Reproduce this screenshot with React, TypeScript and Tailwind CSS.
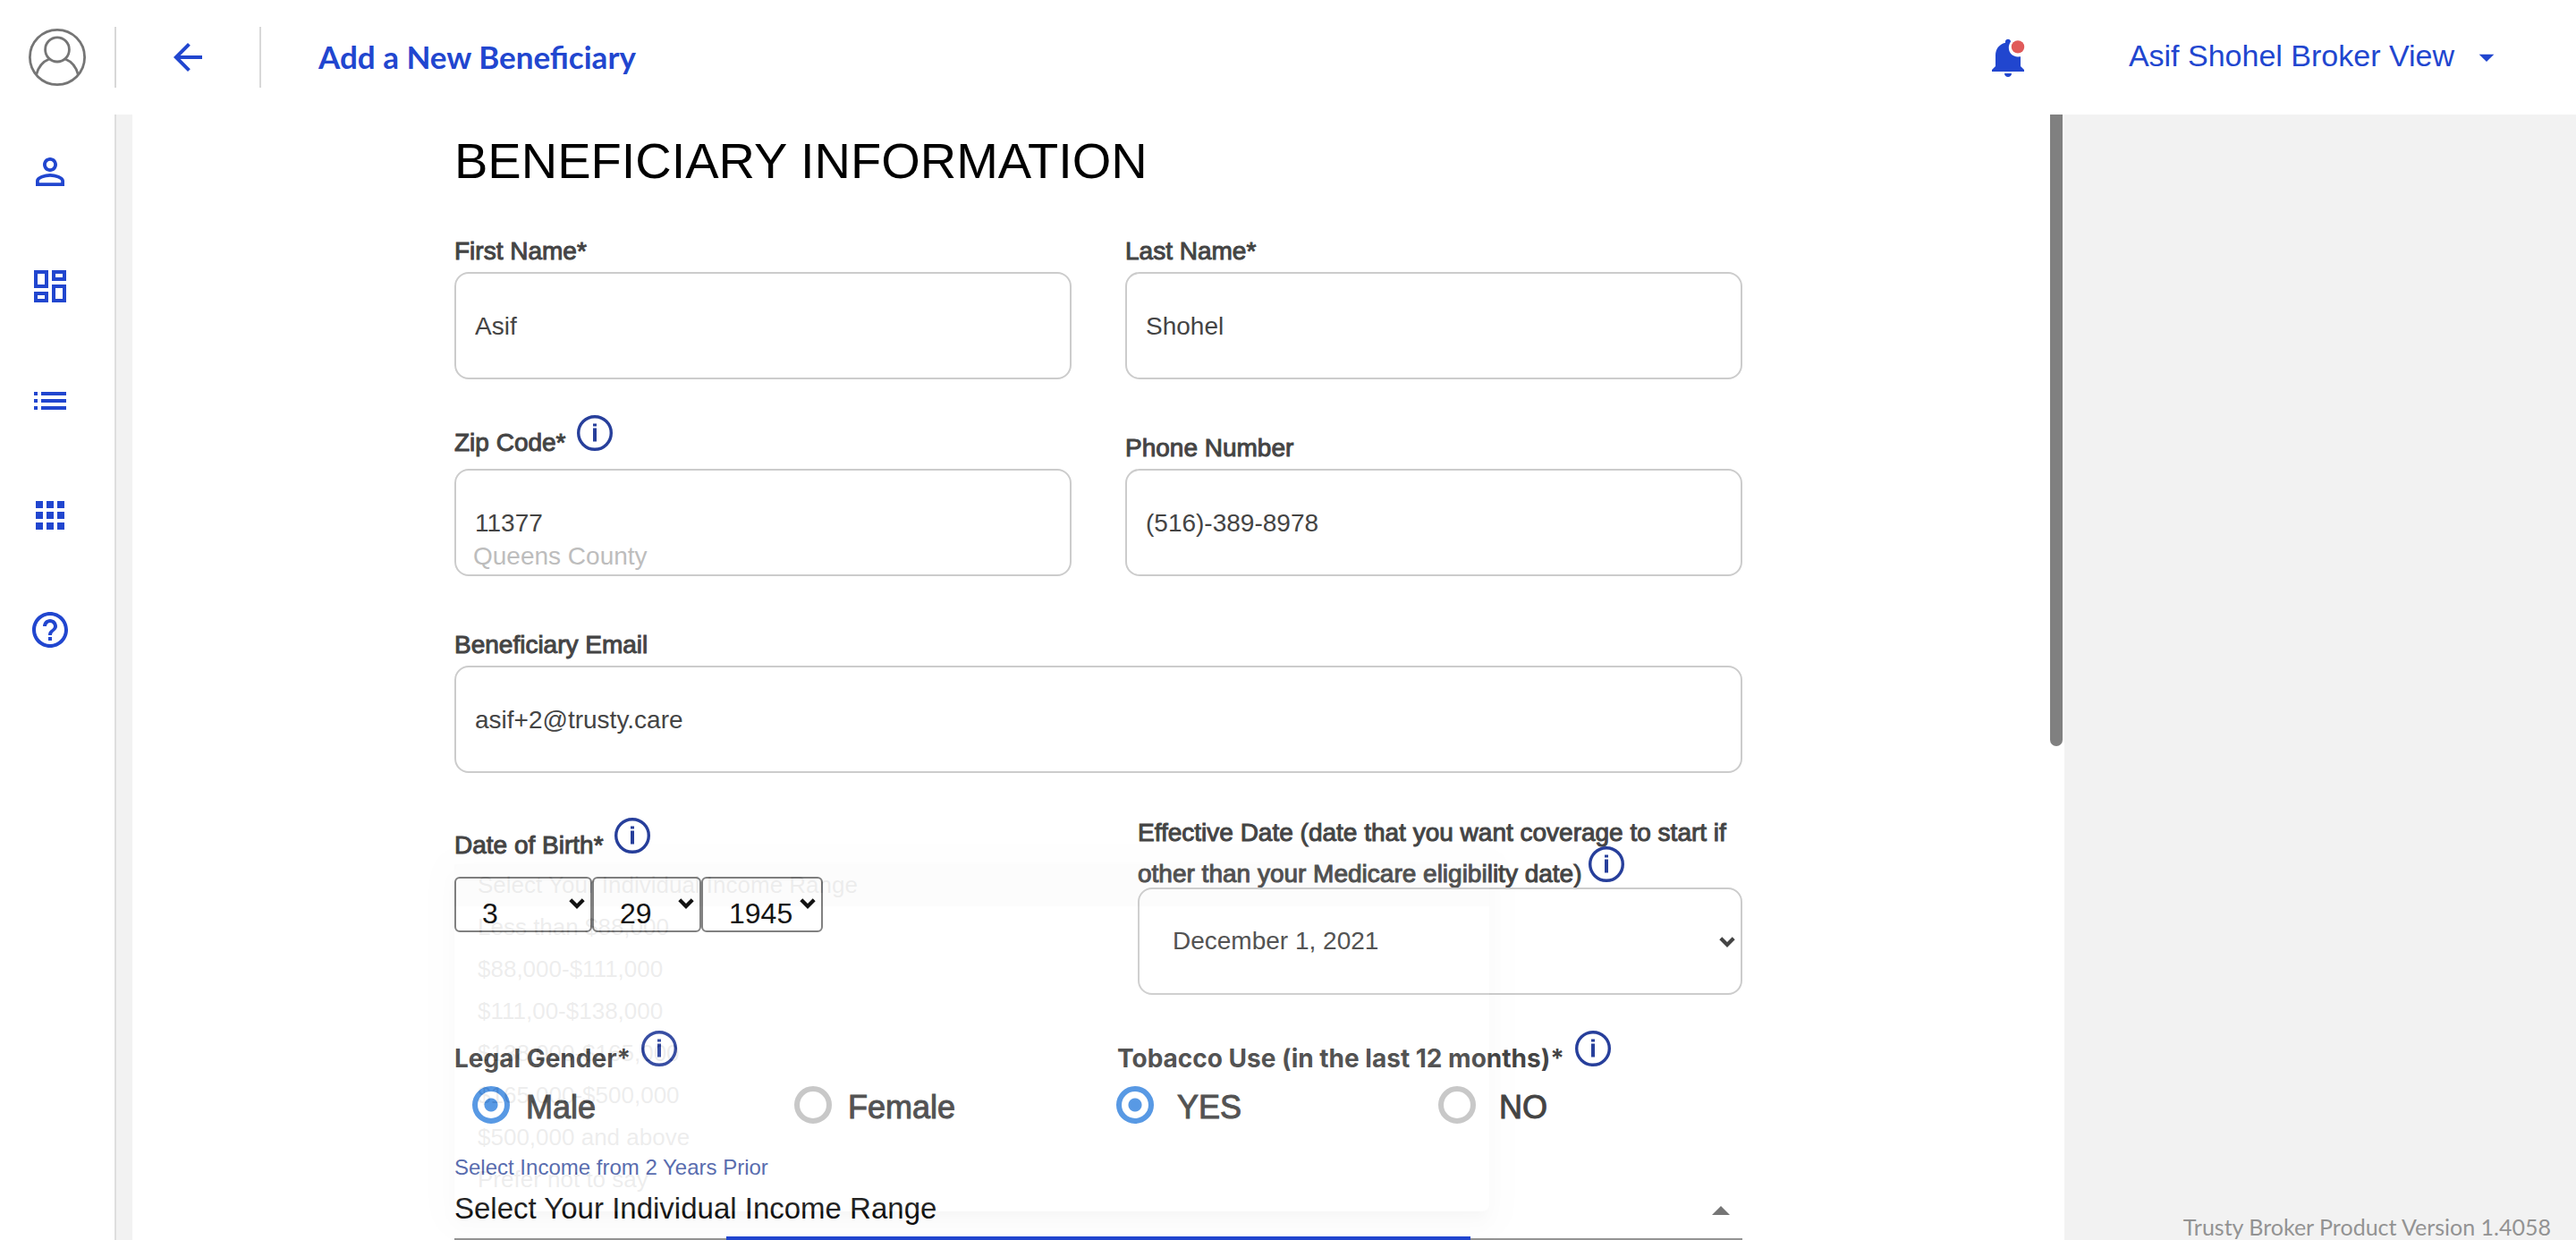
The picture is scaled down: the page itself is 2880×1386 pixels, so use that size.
import type { ReactNode } from "react";
import {
  MdApps,
  MdArrowBack,
  MdArrowDropDown,
  MdHelpOutline,
  MdList,
  MdOutlineDashboard,
  MdPersonOutline,
} from "react-icons/md";

const stroked = "[-webkit-text-stroke:1px_#444444]";

function InfoIcon({ className = "" }: { className?: string }) {
  return (
    <svg viewBox="0 0 40 40" className={`size-10 shrink-0 ${className}`} role="img" aria-label="More information">
      <circle cx="20" cy="20" r="18.3" fill="#fff" stroke="#273f9b" strokeWidth="3.4" />
      <rect x="18" y="9.5" width="4" height="3" fill="#273f9b" />
      <rect x="18" y="14.5" width="4" height="15" fill="#273f9b" />
    </svg>
  );
}

function Chevron({ className }: { className: string }) {
  return (
    <svg viewBox="0 0 18 12" className={`pointer-events-none absolute h-3 w-[18px] ${className}`} aria-hidden="true">
      <path d="M1.8 1.8 L9 9 L16.2 1.8" fill="none" stroke="currentColor" strokeWidth="4.2" />
    </svg>
  );
}

function InfoLabel({ children, htmlFor, font = "" }: { children: ReactNode; htmlFor?: string; font?: string }) {
  return (
    <div className="flex h-10 items-start gap-3">
      <label htmlFor={htmlFor} className={`pt-[15px] leading-8 whitespace-nowrap ${font || stroked}`}>
        {children}
      </label>
      <InfoIcon />
    </div>
  );
}

const inputClass =
  "block h-[120px] w-full rounded-2xl border-2 border-[#cccccc] bg-white px-[21px] pt-0.5 text-[28px] text-[#444444] outline-none";

function Field({
  id,
  label,
  value,
  type = "text",
  info = false,
  hint,
}: {
  id: string;
  label: string;
  value: string;
  type?: string;
  info?: boolean;
  hint?: string;
}) {
  return (
    <div>
      {info ? (
        <div className="pb-5">
          <InfoLabel htmlFor={id}>{label}</InfoLabel>
        </div>
      ) : (
        <label htmlFor={id} className={`block h-10 leading-[34px] ${stroked}`}>
          {label}
        </label>
      )}
      <div className="relative">
        <input id={id} type={type} defaultValue={value} className={inputClass} />
        {hint && <span className="absolute bottom-1.5 left-[21px] leading-8 text-[#bdbdbd]">{hint}</span>}
      </div>
    </div>
  );
}

function DateSelect({ label, value, width }: { label: string; value: string; width: string }) {
  return (
    <div className={`relative ${width}`}>
      <select
        aria-label={label}
        defaultValue={value}
        className="block h-[62px] w-full appearance-none rounded-md border-2 border-[#767676] bg-white pt-5 pl-[29px] text-[32px] leading-9 text-black"
      >
        <option>{value}</option>
      </select>
      <Chevron className="top-6 right-2 text-black" />
    </div>
  );
}

function Radio({ name, label, checked = false, gap }: { name: string; label: string; checked?: boolean; gap: string }) {
  return (
    <label className={`flex items-start pl-5 text-[36px] leading-[48px] ${gap} ${stroked}`}>
      <input
        type="radio"
        name={name}
        defaultChecked={checked}
        className="size-[42px] shrink-0 appearance-none rounded-full border-[6px] border-[#c4c4c4] bg-white checked:border-[#4a90e2] checked:bg-[radial-gradient(circle,#4a90e2_7px,#ffffff_8px)]"
      />
      {label}
    </label>
  );
}

const incomeRanges = [
  "Select Your Individual Income Range",
  "Less than $88,000",
  "$88,000-$111,000",
  "$111,00-$138,000",
  "$138,000-$165,000",
  "$165,000-$500,000",
  "$500,000 and above",
  "Prefer not to say",
];

const navItems = [
  { label: "Beneficiaries", Icon: MdPersonOutline },
  { label: "Dashboard", Icon: MdOutlineDashboard },
  { label: "List", Icon: MdList },
  { label: "Apps", Icon: MdApps },
  { label: "Help", Icon: MdHelpOutline },
];

function Header() {
  return (
    <header className="flex h-32 shrink-0 items-center bg-white text-[#2146cf]">
      <button type="button" aria-label="Profile" className="ml-8">
        <svg viewBox="0 0 64 64" className="size-16" fill="none" stroke="#757575" strokeWidth="2.8" aria-hidden="true">
          <circle cx="32" cy="32" r="30.6" />
          <ellipse cx="32" cy="23.4" rx="13.4" ry="13.6" />
          <path d="M8.6 51.5 C11 42 17 36.4 23.4 33.8 M40.6 33.8 C47 36.4 53 42 55.4 51.5" />
        </svg>
      </button>
      <div className="ml-8 h-[68px] w-0.5 bg-[#d8d8d8]" />
      <button type="button" aria-label="Back" className="mx-14">
        <MdArrowBack className="size-12" />
      </button>
      <div className="h-[68px] w-0.5 bg-[#d8d8d8]" />
      <h1 className="ml-16 pb-0.5 font-['Lato',sans-serif] text-[35px] font-bold">Add a New Beneficiary</h1>
      <button type="button" aria-label="Notifications" className="ml-auto pt-0.5">
        <svg viewBox="0 0 38 44" className="h-11 w-[38px]" aria-hidden="true">
          <path
            d="M15 3.5 C15 -.2 21 -.2 21 3.5 C19.5 6 18.8 8 18.8 10 C18.8 16 23 20.4 29 20.4 L32 20.2 L32 31 L36 35 L36 37 L0 37 L0 35 L4 31 L4 19 C4 12 8 6.5 15 4.8 Z"
            fill="#2146cf"
          />
          <path d="M14 39 H22 C22 44.2 14 44.2 14 39 Z" fill="#2146cf" />
          <circle cx="29" cy="9.4" r="7.2" fill="#e05a5a" />
        </svg>
      </button>
      <button type="button" className="mr-20 ml-[115px] flex items-center gap-4 text-[34px]">
        <span className="pb-1">Asif Shohel Broker View</span>
        <MdArrowDropDown className="size-10" />
      </button>
    </header>
  );
}

export default function App() {
  return (
    <div className="flex h-screen flex-col overflow-hidden bg-[#f2f2f2] font-['Liberation_Sans',Arial,sans-serif]">
      <Header />
      <div className="flex min-h-0 flex-1">
        <nav className="flex w-[130px] shrink-0 flex-col gap-20 border-r-2 border-[#dedede] bg-white pt-10 pl-8 text-[#2146cf]">
          {navItems.map(({ label, Icon }) => (
            <a key={label} href="#" aria-label={label} className="block size-12">
              <Icon className="size-12" />
            </a>
          ))}
        </nav>

        <main className="relative ml-[18px] w-3/4 shrink-0 overflow-hidden bg-white">
          <form className="mx-auto w-2/3 pt-5 text-[28px] text-[#444444]">
            <h2 className="text-[56px] leading-[64px] text-black">BENEFICIARY INFORMATION</h2>

            <div className="mt-[52px] grid grid-cols-2 items-end gap-x-[60px]">
              <Field id="first" label="First Name*" value="Asif" />
              <Field id="last" label="Last Name*" value="Shohel" />
            </div>
            <div className="mt-10 grid grid-cols-2 items-end gap-x-[60px]">
              <Field id="zip" label="Zip Code*" value="11377" info hint="Queens County" />
              <Field id="phone" label="Phone Number" value="(516)-389-8978" type="tel" />
            </div>
            <div className="mt-[60px]">
              <Field id="email" label="Beneficiary Email" value="asif+2@trusty.care" type="email" />
            </div>

            <div className="mt-11 grid grid-cols-2 gap-x-[60px]">
              <div className="pt-1.5">
                <InfoLabel>Date of Birth*</InfoLabel>
                <div className="mt-[26px] flex">
                  <DateSelect label="Birth month" value="3" width="w-[154px]" />
                  <DateSelect label="Birth day" value="29" width="w-[122px]" />
                  <DateSelect label="Birth year" value="1945" width="w-[136px]" />
                </div>
              </div>
              <div className="pl-3.5">
                <label htmlFor="effective" className={`block leading-[46px] ${stroked}`}>
                  Effective Date (date that you want coverage to start if other than your Medicare eligibility date){" "}
                  <InfoIcon className="-mt-2 inline-block align-baseline" />
                </label>
                <div className="relative -mt-2">
                  <select
                    id="effective"
                    defaultValue="December 1, 2021"
                    className="block h-[120px] w-full appearance-none rounded-2xl border-2 border-[#cccccc] bg-white pl-[37px] text-[28px] text-[#444444]"
                  >
                    <option>December 1, 2021</option>
                  </select>
                  <Chevron className="top-[55px] right-2 text-[#444444]" />
                </div>
              </div>
            </div>

            <div className="mt-10 grid grid-cols-2">
              <div>
                <InfoLabel font="font-['Inter',sans-serif] font-bold">Legal Gender*</InfoLabel>
                <div className="mt-[22px] grid grid-cols-2">
                  <Radio name="gender" label="Male" checked gap="gap-[18px]" />
                  <Radio name="gender" label="Female" gap="gap-[18px]" />
                </div>
              </div>
              <div>
                <div className="pl-[21px]">
                  <InfoLabel font="font-['Inter',sans-serif] font-bold">
                    Tobacco Use (in the last 12 months)*
                  </InfoLabel>
                </div>
                <div className="mt-[22px] grid grid-cols-2">
                  <Radio name="tobacco" label="YES" checked gap="gap-[26px]" />
                  <Radio name="tobacco" label="NO" gap="gap-[26px]" />
                </div>
              </div>
            </div>

            <label htmlFor="income" className="mt-[27px] block text-[24px] leading-8 text-[#4b5fa8]">
              Select Income from 2 Years Prior
            </label>
            <div className="relative">
              <select
                id="income"
                defaultValue={incomeRanges[0]}
                className="block h-[65px] w-full appearance-none border-b-2 border-[#949494] bg-transparent pb-[3px] text-[33px] text-[#111111]"
              >
                {incomeRanges.map((range) => (
                  <option key={range}>{range}</option>
                ))}
              </select>
              <svg
                viewBox="0 0 20 10"
                className="pointer-events-none absolute right-3.5 bottom-7 h-2.5 w-5"
                aria-hidden="true"
              >
                <path d="M0 10 L10 0 L20 10 Z" fill="#757575" />
              </svg>
              <div className="absolute right-[304px] bottom-0 left-[304px] h-1 bg-[#2146cf]" />
              <ul className="pointer-events-none absolute right-[283px] bottom-8 left-0 rounded-lg bg-white pb-3 text-[26px] leading-[47px] text-black/87 opacity-8 shadow-[0_10px_10px_-6px_rgba(0,0,0,0.2),0_16px_20px_2px_rgba(0,0,0,0.14),0_6px_28px_4px_rgba(0,0,0,0.12)]">
                {incomeRanges.map((range) => (
                  <li key={range} className="px-[26px] first:bg-black/12">
                    {range}
                  </li>
                ))}
              </ul>
            </div>
          </form>
          <div className="absolute top-0 right-0.5 h-[706px] w-3.5 rounded-b-full bg-[#808080]" aria-hidden="true" />
        </main>

        <footer className="flex flex-1 items-end justify-end pr-7 font-['Lato',sans-serif] text-[25px] leading-[30px] whitespace-nowrap text-[#939393]">
          Trusty Broker Product Version 1.4058
        </footer>
      </div>
    </div>
  );
}
